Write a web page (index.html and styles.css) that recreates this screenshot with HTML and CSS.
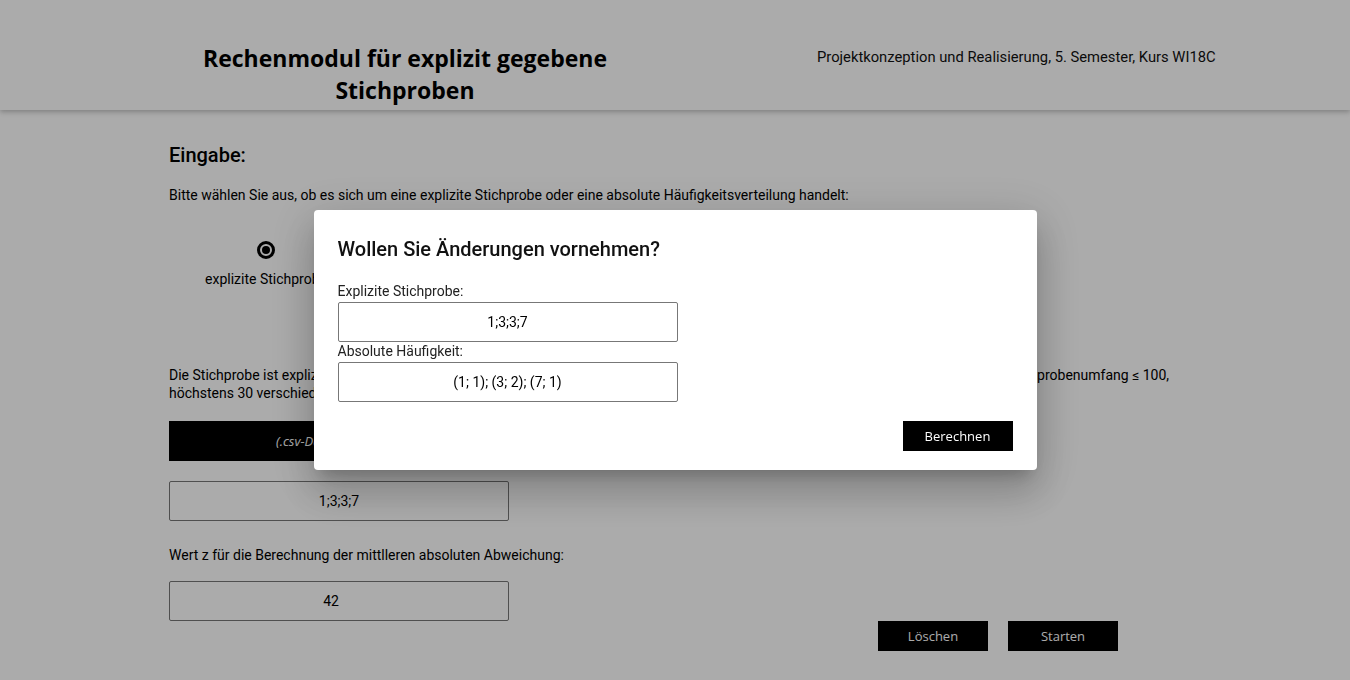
FILE: index.html
```html
<!DOCTYPE html>
<html lang="de">
<head>
<meta charset="utf-8">
<title>Rechenmodul</title>
<link rel="stylesheet" href="styles.css">
</head>
<body>
<header class="header">
  <div class="header-title">Rechenmodul für explizit gegebene Stichproben</div>
  <div class="header-sub">Projektkonzeption und Realisierung, 5. Semester, Kurs WI18C</div>
</header>
<main class="main">
  <h2 class="section-title">Eingabe:</h2>
  <p class="text">Bitte wählen Sie aus, ob es sich um eine explizite Stichprobe oder eine absolute Häufigkeitsverteilung handelt:</p>
  <div class="options">
    <div class="option">
      <span class="radio checked"></span>
      <span class="option-label">explizite Stichprobe</span>
    </div>
    <div class="option">
      <span class="radio"></span>
      <span class="option-label">absolute Häufigkeitsverteilung</span>
    </div>
  </div>
  <p class="text para"><span class="line">Die Stichprobe ist explizit als .csv-Datei hochzuladen oder manuell in das Eingabefeld einzugeben (Semikolon als Trennzeichen nutzen, Stichprobenumfang ≤ 100,</span><span class="line">höchstens 30 verschiedene Merkmalsausprägungen):</span></p>
  <div class="upload"><span class="upload-text">(.csv-Datei hochladen)</span></div>
  <div class="field">1;3;3;7</div>
  <p class="text wert">Wert z für die Berechnung der mittlleren absoluten Abweichung:</p>
  <div class="field field-z">42</div>
  <div class="actions">
    <button class="btn">Löschen</button>
    <button class="btn">Starten</button>
  </div>
</main>
<div class="overlay">
  <div class="modal">
    <h3 class="modal-title">Wollen Sie Änderungen vornehmen?</h3>
    <div class="modal-label">Explizite Stichprobe:</div>
    <div class="modal-field">1;3;3;7</div>
    <div class="modal-label">Absolute Häufigkeit:</div>
    <div class="modal-field">(1; 1); (3; 2); (7; 1)</div>
    <div class="modal-actions">
      <button class="btn btn-modal">Berechnen</button>
    </div>
  </div>
</div>
</body>
</html>
```
FILE: styles.css
```css
* { box-sizing: border-box; }
html, body { margin: 0; padding: 0; }
body {
  font-family: Roboto, "Liberation Sans", sans-serif;
  color: #000;
  background: #fff;
  width: 1350px;
  height: 680px;
  overflow: hidden;
}
.header {
  height: 110px;
  background: #fff;
  box-shadow: 0 2px 5px rgba(0,0,0,0.25);
  display: flex;
  position: relative;
}
.header-title {
  width: 470px;
  margin-left: 170px;
  padding-top: 42px;
  text-align: center;
  font-family: "Open Sans", "Noto Sans", sans-serif;
  font-weight: 700;
  font-size: 23px;
  line-height: 32px;
  padding-left: 20px;
  padding-right: 20px;
}
.header-sub {
  padding-left: 177px;
  padding-top: 47px;
  font-size: 14.75px;
  line-height: 20px;
  color: #111;
}
.main {
  padding-left: 169px;
  width: 1181px;
}
.section-title {
  margin: 33px 0 0 0;
  font-size: 20px;
  font-weight: 500;
  line-height: 24px;
}
.text {
  margin: 0;
  font-size: 14px;
  line-height: 18px;
}
.main > .text:first-of-type { margin-top: 19px; }
.options {
  display: flex;
  margin-top: 37px;
}
.option {
  width: 194px;
  display: flex;
  flex-direction: column;
  align-items: center;
}
.radio {
  width: 18px;
  height: 18px;
  border-radius: 50%;
  border: 3px solid #000;
  display: flex;
  align-items: center;
  justify-content: center;
}
.radio.checked::after {
  content: "";
  width: 8px;
  height: 8px;
  border-radius: 50%;
  background: #000;
}
.option-label {
  margin-top: 11px;
  font-size: 14px;
  line-height: 18px;
}
.para { margin-top: 78px; }
.line {
  display: block;
  white-space: nowrap;
}
.upload {
  margin-top: 19px;
  height: 40px;
  width: 340px;
  background: #000;
  display: flex;
  align-items: center;
  justify-content: center;
}
.upload-text {
  color: #fff;
  font-family: "Open Sans", "Noto Sans", sans-serif;
  font-style: italic;
  font-size: 13px;
}
.field {
  margin-top: 20px;
  width: 340px;
  height: 40px;
  border: 1px solid #777;
  border-radius: 2px;
  display: flex;
  align-items: center;
  justify-content: center;
  font-size: 14px;
}
.wert { margin-top: 25px; }
.field-z {
  margin-top: 17px;
  padding-right: 16px;
}
.actions {
  display: flex;
  justify-content: flex-end;
  gap: 20px;
  padding-right: 63px;
}
.btn {
  width: 110px;
  height: 30px;
  background: #000;
  color: #fff;
  border: none;
  font-family: "Open Sans", "Noto Sans", sans-serif;
  font-size: 13px;
  padding: 0;
}
.overlay {
  position: fixed;
  inset: 0;
  background: rgba(0,0,0,0.33);
  display: flex;
  align-items: center;
  justify-content: center;
}
.modal {
  width: 723px;
  height: 260px;
  background: #fff;
  border-radius: 4px;
  padding: 27px 24px 19px 24px;
  box-shadow: 0 11px 15px -7px rgba(0,0,0,0.2), 0 24px 38px 3px rgba(0,0,0,0.14), 0 9px 46px 8px rgba(0,0,0,0.12);
}
.modal-title {
  margin: 0 0 21px 0;
  font-size: 20px;
  font-weight: 500;
  line-height: 24px;
  color: #111;
}
.modal-label {
  font-size: 14px;
  line-height: 18px;
  color: #222;
}
.modal-field {
  margin-top: 2px;
  width: 340px;
  height: 40px;
  border: 1px solid #777;
  border-radius: 2px;
  display: flex;
  align-items: center;
  justify-content: center;
  font-size: 14px;
}
.modal-actions {
  display: flex;
  justify-content: flex-end;
  margin-top: 19px;
}
```
